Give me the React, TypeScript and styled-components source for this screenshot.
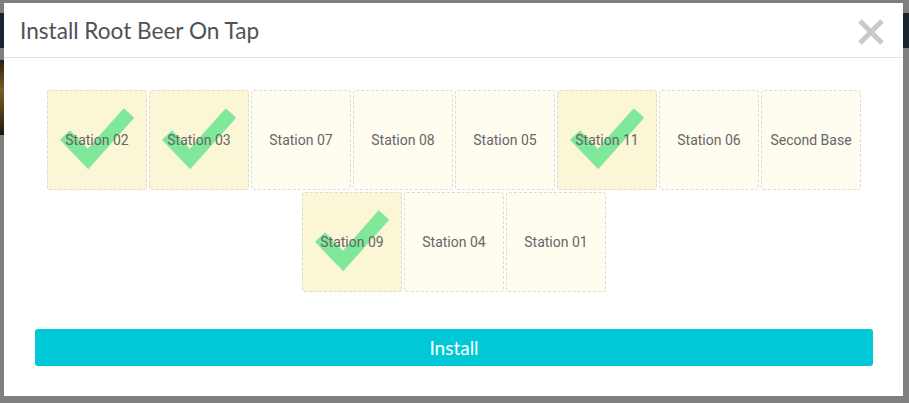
import React from "react";
import styled, { createGlobalStyle } from "styled-components";

const GlobalStyle = createGlobalStyle`
  html, body { margin: 0; padding: 0; }
  body { background: #7f7f7f; overflow: hidden; }
`;

const Stage = styled.div`
  position: relative;
  width: 909px;
  height: 403px;
  background: #7f7f7f;
  overflow: hidden;
`;

const PageBehind = styled.div`
  display: flex;
  flex-direction: column;
  padding-top: 13px;
  gap: 12px;
`;

const TopBar = styled.div`
  height: 35px;
  background: #1a242e;
`;

const Hero = styled.div`
  width: 120px;
  height: 75px;
  background: linear-gradient(180deg, #2a2010 0%, #7a5d22 40%, #4a3614 75%, #1a140a 100%);
`;

const Modal = styled.div`
  position: absolute;
  left: 4px;
  top: 3px;
  width: 899px;
  height: 393px;
  background: #ffffff;
  display: flex;
  flex-direction: column;
  box-sizing: border-box;
`;

const Header = styled.div`
  height: 55px;
  box-sizing: border-box;
  border-bottom: 1px solid #e3e3e3;
  display: flex;
  align-items: center;
  justify-content: space-between;
  padding: 0 19px 0 16px;
`;

const Title = styled.h4`
  margin: 0;
  font-family: "Lato", "Open Sans", sans-serif;
  font-weight: 400;
  font-size: 22.6px;
  color: #4d5257;
`;

const CloseButton = styled.button`
  border: none;
  background: transparent;
  padding: 0;
  width: 26px;
  height: 26px;
  margin-top: 4px;
  cursor: pointer;
  display: flex;
`;

const Body = styled.div`
  padding: 31px 30px 30px 31px;
  display: flex;
  flex-direction: column;
  gap: 36px;
`;

const TileGrid = styled.div`
  display: flex;
  flex-wrap: wrap;
  justify-content: center;
`;

const Tile = styled.div<{ $selected: boolean }>`
  position: relative;
  width: 100px;
  height: 100px;
  margin: 1px;
  box-sizing: border-box;
  border: 1px dashed #dcdcd4;
  border-radius: 3px;
  background: ${(p) => (p.$selected ? "#faf6d6" : "#fffdf0")};
  display: flex;
  align-items: center;
  justify-content: center;
`;

const TileLabel = styled.span`
  position: relative;
  z-index: 1;
  font-family: "Roboto", "Liberation Sans", sans-serif;
  font-size: 14px;
  color: #666666;
`;

const CheckMark = styled.svg`
  position: absolute;
  left: -1px;
  top: -1px;
  width: 100px;
  height: 100px;
  z-index: 0;
`;

const InstallButton = styled.button`
  height: 37px;
  width: 100%;
  border: none;
  border-radius: 3px;
  background: #00c8d6;
  color: #ffffff;
  font-family: "Lato", "Open Sans", sans-serif;
  font-size: 19px;
  cursor: pointer;
  padding: 0;
`;

const stations = [
  { name: "Station 02", selected: true },
  { name: "Station 03", selected: true },
  { name: "Station 07", selected: false },
  { name: "Station 08", selected: false },
  { name: "Station 05", selected: false },
  { name: "Station 11", selected: true },
  { name: "Station 06", selected: false },
  { name: "Second Base", selected: false },
  { name: "Station 09", selected: true },
  { name: "Station 04", selected: false },
  { name: "Station 01", selected: false },
];

function Check() {
  return (
    <CheckMark viewBox="0 0 100 100">
      <polyline
        points="18,45 41,69 82,23"
        fill="none"
        stroke="#80e89a"
        strokeWidth="14"
        strokeLinejoin="miter"
        strokeLinecap="butt"
      />
    </CheckMark>
  );
}

export default function App() {
  return (
    <>
      <GlobalStyle />
      <Stage>
        <PageBehind>
          <TopBar />
          <Hero />
        </PageBehind>
        <Modal>
          <Header>
            <Title>Install Root Beer On Tap</Title>
            <CloseButton aria-label="Close">
              <svg width="26" height="26" viewBox="0 0 26 26">
                <path d="M2 2 L24 24 M24 2 L2 24" stroke="#c9c9c9" strokeWidth="5" />
              </svg>
            </CloseButton>
          </Header>
          <Body>
            <TileGrid>
              {stations.map((s) => (
                <Tile key={s.name} $selected={s.selected}>
                  {s.selected && <Check />}
                  <TileLabel>{s.name}</TileLabel>
                </Tile>
              ))}
            </TileGrid>
            <InstallButton>Install</InstallButton>
          </Body>
        </Modal>
      </Stage>
    </>
  );
}
